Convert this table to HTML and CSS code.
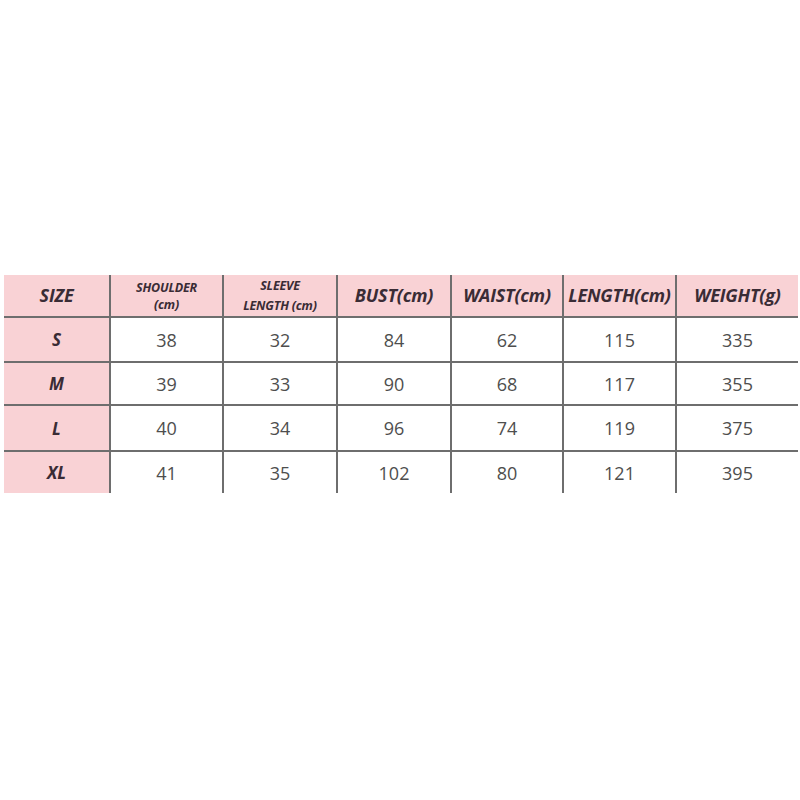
FILE: index.html
```html
<!DOCTYPE html>
<html>
<head>
<meta charset="utf-8">
<link rel="stylesheet" href="styles.css">
</head>
<body>
<div class="page">
  <div class="chart">
    <div class="cell head first"><span class="h">SIZE</span></div>
    <div class="cell head"><span class="h small tight">SHOULDER<br>(cm)</span></div>
    <div class="cell head"><span class="h small">SLEEVE<br>LENGTH (cm)</span></div>
    <div class="cell head"><span class="h">BUST(cm)</span></div>
    <div class="cell head"><span class="h">WAIST(cm)</span></div>
    <div class="cell head"><span class="h">LENGTH(cm)</span></div>
    <div class="cell head last"><span class="h">WEIGHT(g)</span></div>

    <div class="cell size first">S</div>
    <div class="cell num">38</div>
    <div class="cell num">32</div>
    <div class="cell num">84</div>
    <div class="cell num">62</div>
    <div class="cell num">115</div>
    <div class="cell num last">335</div>

    <div class="cell size first">M</div>
    <div class="cell num">39</div>
    <div class="cell num">33</div>
    <div class="cell num">90</div>
    <div class="cell num">68</div>
    <div class="cell num">117</div>
    <div class="cell num last">355</div>

    <div class="cell size first">L</div>
    <div class="cell num">40</div>
    <div class="cell num">34</div>
    <div class="cell num">96</div>
    <div class="cell num">74</div>
    <div class="cell num">119</div>
    <div class="cell num last">375</div>

    <div class="cell size first bottom">XL</div>
    <div class="cell num bottom">41</div>
    <div class="cell num bottom">35</div>
    <div class="cell num bottom">102</div>
    <div class="cell num bottom">80</div>
    <div class="cell num bottom">121</div>
    <div class="cell num last bottom">395</div>
  </div>
</div>
</body>
</html>
```

FILE: styles.css
```css
html, body {
  margin: 0;
  padding: 0;
  background: #ffffff;
}

.page {
  width: 800px;
  height: 800px;
  box-sizing: border-box;
  padding: 275px 2px 0 4px;
}

.chart {
  display: grid;
  grid-template-columns: 107px 113px 114px 114px 112px 113px 121px;
  grid-template-rows: 43px 45px 43px 46px 41px;
  width: 794px;
}

.cell {
  box-sizing: border-box;
  display: flex;
  align-items: center;
  justify-content: center;
  text-align: center;
  border-right: 2px solid #6e6e6e;
  border-bottom: 2px solid #6e6e6e;
  background: #ffffff;
}

.cell.last {
  border-right: none;
}

.cell.bottom {
  border-bottom: none;
}

.head {
  background: #f9d2d5;
}

.first {
  background: #f9d2d5;
}

.h {
  font-family: "Open Sans", "DejaVu Sans", sans-serif;
  font-weight: 700;
  font-style: italic;
  font-size: 18px;
  color: #3a2c35;
  letter-spacing: -0.2px;
  line-height: 1.2;
}

.h.small {
  font-size: 12.5px;
  line-height: 20px;
  letter-spacing: -0.2px;
}

.h.small.tight {
  line-height: 17px;
}

.size {
  font-family: "Open Sans", "DejaVu Sans", sans-serif;
  font-weight: 700;
  font-style: italic;
  font-size: 17px;
  color: #3a2c35;
}

.num {
  font-family: "Open Sans", "DejaVu Sans", sans-serif;
  font-size: 18px;
  color: #4e4e4e;
}
```
